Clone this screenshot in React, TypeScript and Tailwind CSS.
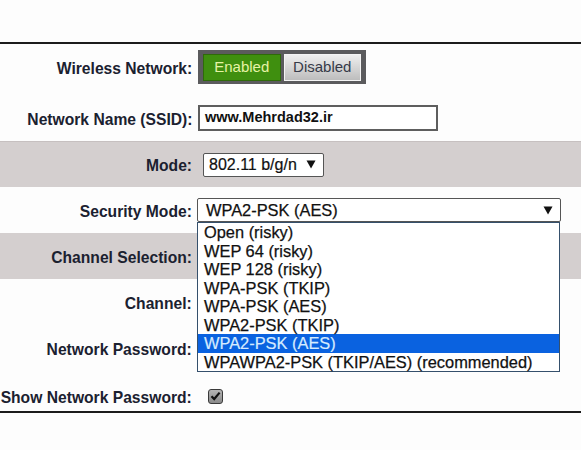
import React from "react";

const Arrow = () => (
  <svg width="10" height="9" viewBox="0 0 10 9" className="shrink-0">
    <polygon points="0.5,0.5 9.5,0.5 5,8.5" fill="#111" />
  </svg>
);

const Label = ({ children }: { children: React.ReactNode }) => (
  <div className="w-[192px] shrink-0 whitespace-nowrap text-[17px] font-bold leading-none text-[#1b2130] flex justify-end pt-[2px]">
    <span className="inline-block origin-right scale-x-[0.92]">{children}</span>
  </div>
);

const options = [
  "Open (risky)",
  "WEP 64 (risky)",
  "WEP 128 (risky)",
  "WPA-PSK (TKIP)",
  "WPA-PSK (AES)",
  "WPA2-PSK (TKIP)",
  "WPA2-PSK (AES)",
  "WPAWPA2-PSK (TKIP/AES) (recommended)",
];

export default function App() {
  return (
    <div
      className="relative w-[581px] h-[450px] overflow-hidden bg-[#fdfdfd]"
      style={{ fontFamily: '"Liberation Sans", Arial, sans-serif' }}
    >
      <div className="h-[42px]" />
      <div className="h-[2px] bg-[#1c1c1c]" />

      {/* Wireless Network */}
      <div className="flex h-[51px] items-start pt-[6px]">
        <div className="flex h-[34px] items-center">
          <Label>Wireless Network:</Label>
        </div>
        <div className="ml-[6px] flex h-[34px] w-[168px] items-center gap-[3px] bg-[#5b5b5d] px-[5px]">
          <div className="flex h-[27px] w-[78px] items-center justify-center border border-[#2f6a0a] bg-[#3f8f0f] text-[15px] text-[#e6f3a6]">
            Enabled
          </div>
          <div className="flex h-[27px] w-[78px] items-center justify-center border border-[#f4f4f4] bg-gradient-to-b from-[#efefef] to-[#bdbdbd] text-[15px] text-[#363a48]">
            Disabled
          </div>
        </div>
      </div>

      {/* SSID */}
      <div className="flex h-[46px] items-center">
        <Label>Network Name (SSID):</Label>
        <div className="ml-[6px] flex h-[26px] w-[240px] items-center border-2 border-[#5e5e5e] bg-white pl-[5px] text-[14.5px] font-bold text-[#111]">
          www.Mehrdad32.ir
        </div>
      </div>

      {/* Mode */}
      <div className="flex h-[46px] items-center border-t border-[#c6c0c0] bg-[#d4cfcf]">
        <Label>Mode:</Label>
        <div className="ml-[11px] flex h-[24px] w-[121px] items-center justify-between rounded-[2px] border border-[#555] bg-white pl-[5px] pr-[7px] text-[16px] text-[#111] [-webkit-text-stroke:0.2px_#111]">
          <span>802.11 b/g/n</span>
          <Arrow />
        </div>
      </div>

      {/* Security Mode */}
      <div className="relative z-10 flex h-[46px] items-center">
        <Label>Security Mode:</Label>
        <div className="relative ml-[5px] w-[364px]">
          <div className="flex h-[24px] items-center justify-between rounded-[2px] border border-[#555] bg-white pl-[8px] pr-[7px] text-[16.4px] text-[#111] [-webkit-text-stroke:0.25px_#111]">
            <span>WPA2-PSK (AES)</span>
            <Arrow />
          </div>
          <div className="absolute left-0 top-[24px] w-[363px] border border-[#35506c] bg-white">
            {options.map((o, i) => (
              <div
                key={o}
                className={
                  i === 6
                    ? "h-[18.5px] whitespace-nowrap bg-[#0a62e0] pl-[6px] text-[16.4px] leading-[18.5px] text-[#d6ebff] [-webkit-text-stroke:0.2px_#d6ebff]"
                    : "h-[18.5px] whitespace-nowrap pl-[6px] text-[16.4px] leading-[18.5px] text-[#111] [-webkit-text-stroke:0.25px_#111]"
                }
              >
                {o}
              </div>
            ))}
          </div>
        </div>
      </div>

      {/* Channel Selection */}
      <div className="flex h-[46px] items-center bg-[#d4cfcf]">
        <Label>Channel Selection:</Label>
      </div>

      {/* Channel */}
      <div className="flex h-[46px] items-center">
        <Label>Channel:</Label>
      </div>

      {/* Network Password */}
      <div className="flex h-[46px] items-center">
        <Label>Network Password:</Label>
      </div>

      {/* Show Network Password */}
      <div className="flex h-[40px] items-center pt-[10px]">
        <Label>Show Network Password:</Label>
        <div className="ml-[16px] flex h-[15px] w-[15px] items-center justify-center rounded-[3px] border border-[#3a3a3a] bg-gradient-to-b from-[#b5b5b5] to-[#8a8a8a]">
          <svg width="11" height="10" viewBox="0 0 11 10">
            <path d="M1.5 5.2 L4.2 8 L9.6 1.6" fill="none" stroke="#111" strokeWidth="2.2" />
          </svg>
        </div>
      </div>

      <div className="h-[2px] bg-[#1c1c1c]" />
    </div>
  );
}
